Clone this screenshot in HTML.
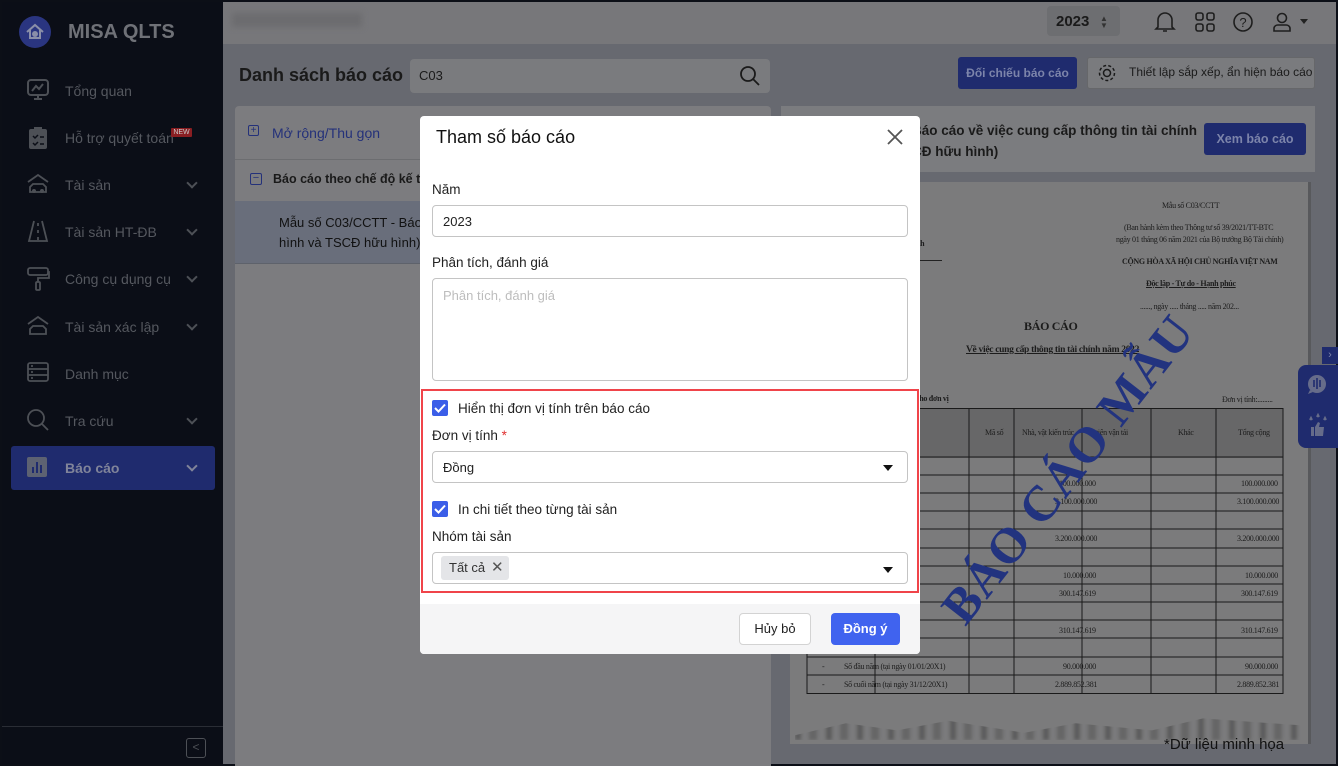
<!DOCTYPE html>
<html><head><meta charset="utf-8"><style>
*{box-sizing:border-box;margin:0;padding:0}
body{width:1338px;height:766px;overflow:hidden;position:relative;font-family:"Liberation Sans",sans-serif;background:#0c0f17}
.a{position:absolute}
.side{left:2px;top:2px;width:221px;height:762px;background:#0b0e17}
.nav{position:absolute;left:26px;font-size:14px;color:#55585f}
.chev{position:absolute;left:188px;width:8px;height:8px;border-right:2px solid #4d5056;border-bottom:2px solid #4d5056;transform:rotate(45deg)}
.paper{font-family:"Liberation Serif",serif;color:#1c1c1c;font-size:8px;position:absolute;white-space:nowrap;letter-spacing:-0.3px}
.modal{left:420px;top:116px;width:500px;height:538px;background:#fff;border-radius:4px;overflow:hidden}
.lbl{position:absolute;left:12px;font-size:13.5px;color:#222}
.inp{position:absolute;left:12px;width:476px;border:1px solid #c4c4c4;border-radius:4px;background:#fff}
.cb{position:absolute;left:12px;width:16px;height:16px;background:#3b5ee8;border-radius:2px}
.caret{position:absolute;right:14px;width:0;height:0;border-left:5px solid transparent;border-right:5px solid transparent;border-top:6px solid #111}
</style></head><body>
<div class="a side"></div>
<div class="a" style="left:19px;top:16px;width:32px;height:32px;border-radius:50%;background:#2a3580"></div>
<svg class="a" style="left:24px;top:21px" width="22" height="22" viewBox="0 0 22 22"><path d="M3 11 L11 4 L19 11 M6 9 V17 H16 V9" fill="none" stroke="#8a8fa8" stroke-width="2"/><circle cx="11" cy="13" r="3" fill="#8a8fa8"/></svg>
<div class="a" style="left:68px;top:21px;font-size:20px;font-weight:bold;color:#6f7177">MISA QLTS</div>
<div class="nav" style="left:65px;top:83px">Tổng quan</div>
<svg class="a" style="left:26px;top:78px" width="24" height="24"><rect x="2" y="2" width="20" height="15" rx="3" fill="none" stroke="#4d5056" stroke-width="2"/><path d="M6 13 L10 8 L13 11 L17 6 M12 17 V21 M8 21 H16" fill="none" stroke="#4d5056" stroke-width="2"/></svg>
<div class="nav" style="left:65px;top:130px">Hỗ trợ quyết toán</div>
<div class="a" style="left:171px;top:128px;width:21px;height:9px;background:#8a1e22;color:#ccc;font-size:7px;text-align:center;line-height:9px;border-radius:1px">NEW</div>
<svg class="a" style="left:28px;top:126px" width="20" height="24"><rect x="1" y="3" width="18" height="20" rx="2" fill="#4d5056"/><rect x="6" y="1" width="8" height="4" fill="#4d5056"/><path d="M5 10 L7 12 L10 9 M5 17 L7 19 L10 16 M12 11 H16 M12 18 H16" stroke="#0b0e17" stroke-width="1.5" fill="none"/></svg>
<div class="nav" style="left:65px;top:177px">Tài sản</div><div class="chev" style="top:179px"></div>
<svg class="a" style="left:26px;top:172px" width="24" height="24"><path d="M2 10 L12 3 L22 10 M4 20 V15 L7 12 H17 L20 15 V20 Z" fill="none" stroke="#4d5056" stroke-width="1.8"/><circle cx="8" cy="19" r="2" fill="#4d5056"/><circle cx="16" cy="19" r="2" fill="#4d5056"/></svg>
<div class="nav" style="left:65px;top:224px">Tài sản HT-ĐB</div><div class="chev" style="top:226px"></div>
<svg class="a" style="left:26px;top:219px" width="24" height="24"><path d="M8 2 L3 22 H21 L16 2 M12 4 V7 M12 11 V14 M12 18 V21" fill="none" stroke="#4d5056" stroke-width="1.8"/></svg>
<div class="nav" style="left:65px;top:271px">Công cụ dụng cụ</div><div class="chev" style="top:273px"></div>
<svg class="a" style="left:26px;top:266px" width="24" height="26"><rect x="2" y="2" width="20" height="7" rx="2" fill="none" stroke="#4d5056" stroke-width="1.8"/><path d="M22 6 H23 V12 H12 V16" fill="none" stroke="#4d5056" stroke-width="1.8"/><rect x="10" y="16" width="4" height="8" rx="1" fill="none" stroke="#4d5056" stroke-width="1.8"/></svg>
<div class="nav" style="left:65px;top:319px">Tài sản xác lập</div><div class="chev" style="top:321px"></div>
<svg class="a" style="left:26px;top:314px" width="24" height="24"><path d="M2 10 L12 3 L22 10 M4 20 V15 L7 12 H17 L20 15 V20 Z" fill="none" stroke="#4d5056" stroke-width="1.8"/></svg>
<div class="nav" style="left:65px;top:366px">Danh mục</div>
<svg class="a" style="left:26px;top:361px" width="24" height="22"><rect x="2" y="2" width="20" height="18" rx="2" fill="none" stroke="#4d5056" stroke-width="1.8"/><path d="M2 8 H22 M2 14 H22 M5 5 H7 M5 11 H7 M5 17 H7" stroke="#4d5056" stroke-width="1.8"/></svg>
<div class="nav" style="left:65px;top:413px">Tra cứu</div><div class="chev" style="top:415px"></div>
<svg class="a" style="left:26px;top:408px" width="24" height="24"><circle cx="10" cy="10" r="8" fill="none" stroke="#4d5056" stroke-width="1.8"/><path d="M16 16 L22 22" stroke="#4d5056" stroke-width="1.8"/></svg>
<div class="a" style="left:11px;top:446px;width:204px;height:44px;background:#1f2b6e;border-radius:3px"></div>
<div class="a" style="left:27px;top:457px;width:20px;height:20px;background:#5d6272;border-radius:2px"></div>
<div class="a" style="left:32px;top:467px;width:2px;height:6px;background:#1f2b6e"></div><div class="a" style="left:36px;top:462px;width:2px;height:11px;background:#1f2b6e"></div><div class="a" style="left:40px;top:465px;width:2px;height:8px;background:#1f2b6e"></div>
<div class="nav" style="left:65px;top:460px;color:#80849a;font-weight:bold">Báo cáo</div><div class="chev" style="top:462px;border-color:#80849a"></div>
<div class="a" style="left:2px;top:726px;width:221px;height:1px;background:#2a2d35"></div>
<div class="a" style="left:186px;top:738px;width:20px;height:20px;border:1.5px solid #4d5056;border-radius:3px;color:#4d5056;font-size:12px;text-align:center;line-height:17px">&lt;</div>

<div class="a" style="left:223px;top:2px;width:1113px;height:762px;background:#676970"></div>
<div class="a" style="left:223px;top:2px;width:1113px;height:42px;background:#77777a"></div>
<div class="a" style="left:232px;top:13px;width:130px;height:14px;background:#6c6c6f;filter:blur(3px)"></div>
<div class="a" style="left:1047px;top:6px;width:73px;height:30px;background:#6d6e71;border-radius:4px"></div>
<div class="a" style="left:1056px;top:13px;font-size:15px;font-weight:bold;color:#1a1a1a">2023</div>
<div class="a" style="left:1100px;top:15px;font-size:8px;line-height:7px;color:#333">▲<br>▼</div>
<svg class="a" style="left:1153px;top:10px" width="24" height="24"><path d="M5 17 V10 a7 7 0 0 1 14 0 V17 L21 19 H3 Z M10 21 H14" fill="none" stroke="#1e1e1e" stroke-width="1.6"/></svg>
<svg class="a" style="left:1193px;top:10px" width="24" height="24"><rect x="3" y="3" width="7" height="7" rx="2" fill="none" stroke="#1e1e1e" stroke-width="1.6"/><rect x="14" y="3" width="7" height="7" rx="2" fill="none" stroke="#1e1e1e" stroke-width="1.6"/><rect x="3" y="14" width="7" height="7" rx="2" fill="none" stroke="#1e1e1e" stroke-width="1.6"/><rect x="14" y="14" width="7" height="7" rx="2" fill="none" stroke="#1e1e1e" stroke-width="1.6"/></svg>
<svg class="a" style="left:1231px;top:10px" width="24" height="24"><circle cx="12" cy="12" r="9" fill="none" stroke="#1e1e1e" stroke-width="1.6"/><text x="12" y="17" font-size="13" text-anchor="middle" fill="#1e1e1e" font-family="Liberation Sans">?</text></svg>
<svg class="a" style="left:1270px;top:10px" width="24" height="24"><circle cx="12" cy="8" r="4.5" fill="none" stroke="#1e1e1e" stroke-width="1.6"/><path d="M4 21 V18 a4 4 0 0 1 4 -3 H16 a4 4 0 0 1 4 3 V21 Z" fill="none" stroke="#1e1e1e" stroke-width="1.6"/></svg>
<div class="a" style="left:1300px;top:19px;border-left:4px solid transparent;border-right:4px solid transparent;border-top:5px solid #222"></div>

<div class="a" style="left:239px;top:65px;font-size:18px;font-weight:bold;color:#1a1a1a">Danh sách báo cáo</div>
<div class="a" style="left:410px;top:59px;width:360px;height:34px;background:#7a7b7e;border-radius:4px"></div>
<div class="a" style="left:419px;top:68px;font-size:13px;color:#1a1a1a">C03</div>
<svg class="a" style="left:739px;top:65px" width="22" height="22"><circle cx="9" cy="9" r="7" fill="none" stroke="#1a1a1a" stroke-width="1.8"/><path d="M14 14 L20 20" stroke="#1a1a1a" stroke-width="1.8"/></svg>
<div class="a" style="left:958px;top:57px;width:119px;height:32px;background:#1f2b6e;border-radius:3px;color:#7c84aa;font-size:12px;font-weight:bold;text-align:center;line-height:32px">Đối chiếu báo cáo</div>
<div class="a" style="left:1087px;top:57px;width:228px;height:32px;background:#7a7b7e;border:1px solid #66676a;border-radius:3px"></div>
<svg class="a" style="left:1096px;top:62px" width="22" height="22"><circle cx="11" cy="11" r="3.5" fill="none" stroke="#1a1a1a" stroke-width="1.5"/><circle cx="11" cy="11" r="7.5" fill="none" stroke="#1a1a1a" stroke-width="1.5" stroke-dasharray="3 2.2"/></svg>
<div class="a" style="left:1129px;top:65px;font-size:12px;color:#1a1a1a">Thiết lập sắp xếp, ẩn hiện báo cáo</div>

<div class="a" style="left:235px;top:106px;width:536px;height:660px;background:#7c7c7f;border-radius:4px 4px 0 0"></div>
<div class="a" style="left:235px;top:159px;width:536px;height:1px;background:#6c6d70"></div>
<div class="a" style="left:248px;top:125px;width:11px;height:11px;border:1px solid #24317a;border-radius:2px;color:#24317a;font-size:10px;line-height:9px;text-align:center">+</div>
<div class="a" style="left:272px;top:125px;font-size:14px;color:#24317a">Mở rộng/Thu gọn</div>
<div class="a" style="left:250px;top:173px;width:12px;height:12px;border:1px solid #24317a;border-radius:2px;color:#24317a;font-size:11px;line-height:9px;text-align:center">−</div>
<div class="a" style="left:273px;top:172px;font-size:12.5px;font-weight:bold;color:#1a1a1a">Báo cáo theo chế độ kế to</div>
<div class="a" style="left:235px;top:201px;width:536px;height:63px;background:#696e7b;border-bottom:1px solid #5e626b"></div>
<div class="a" style="left:279px;top:213px;font-size:13px;color:#111;line-height:20px">Mẫu số C03/CCTT - Báo<br>hình và TSCĐ hữu hình)</div>

<div class="a" style="left:781px;top:106px;width:534px;height:66px;background:#7b7c7f"></div>
<div class="a" style="left:912px;top:120px;font-size:13.5px;font-weight:bold;color:#1a1a1a;line-height:21px">Báo cáo về việc cung cấp thông tin tài chính<br>CĐ hữu hình)</div>
<div class="a" style="left:1204px;top:123px;width:102px;height:32px;background:#1f2b6e;border-radius:3px;color:#7c84aa;font-size:12.5px;font-weight:bold;text-align:center;line-height:32px">Xem báo cáo</div>
<div class="a" style="left:790px;top:182px;width:521px;height:562px;background:#7b7b7c;border-right:3px solid #58595c"></div>
<div class="paper" style="left:1162px;top:201px">Mẫu số C03/CCTT</div>
<div class="paper" style="left:1124px;top:223px">(Ban hành kèm theo Thông tư số 39/2021/TT-BTC</div>
<div class="paper" style="left:1116px;top:235px">ngày 01 tháng 06 năm 2021 của Bộ trưởng Bộ Tài chính)</div>
<div class="paper" style="left:1122px;top:257px;font-weight:bold">CỘNG HÒA XÃ HỘI CHỦ NGHĨA VIỆT NAM</div>
<div class="paper" style="left:1146px;top:279px;font-weight:bold;text-decoration:underline">Độc lập - Tự do - Hạnh phúc</div>
<div class="paper" style="left:1140px;top:302px">......, ngày ..... tháng ..... năm 202...</div>
<div class="paper" style="left:1024px;top:319px;font-size:12px;font-weight:bold">BÁO CÁO</div>
<div class="paper" style="left:966px;top:345px;font-size:9.5px;font-weight:bold;text-decoration:underline">Về việc cung cấp thông tin tài chính năm 2022</div>
<div class="paper" style="left:916px;top:239px;font-weight:bold">nh</div>
<div class="a" style="left:916px;top:260px;width:26px;height:1px;background:#222"></div>
<div class="paper" style="left:916px;top:394px;font-weight:bold">cho đơn vị</div>
<div class="paper" style="left:1222px;top:395px">Đơn vị tính:.........</div>
<div class="a" style="left:920px;top:408px;width:363px;height:50px;background:#676768"></div>
<svg class="a" style="left:806px;top:407px" width="480" height="290">
<g stroke="#1a1a1a" stroke-width="1" fill="none">
<rect x="1" y="1.5" width="476" height="285"/>
<path d="M69 1 V287 M163 1 V287 M208 1 V287 M276 1 V287 M345 1 V287 M410 1 V287"/>
<path d="M1 50 H477 M1 68 H477 M1 86 H477 M1 104 H477 M1 122 H477 M1 141 H477 M1 159 H477 M1 177 H477 M1 195 H477 M1 213 H477 M1 231 H477 M1 250 H477 M1 268 H477"/>
</g></svg>
<div class="paper" style="left:985px;top:428px">Mã số</div>
<div class="paper" style="left:1022px;top:428px">Nhà, vật kiến trúc</div>
<div class="paper" style="left:1096px;top:428px">tiện vận tải</div>
<div class="paper" style="left:1178px;top:428px">Khác</div>
<div class="paper" style="left:1238px;top:428px">Tổng cộng</div>
<div class="paper" style="left:1059px;top:479px">100.000.000</div><div class="paper" style="left:1241px;top:479px">100.000.000</div>
<div class="paper" style="left:1055px;top:497px">3.100.000.000</div><div class="paper" style="left:1237px;top:497px">3.100.000.000</div>
<div class="paper" style="left:1055px;top:534px">3.200.000.000</div><div class="paper" style="left:1237px;top:534px">3.200.000.000</div>
<div class="paper" style="left:1063px;top:571px">10.000.000</div><div class="paper" style="left:1245px;top:571px">10.000.000</div>
<div class="paper" style="left:1059px;top:589px">300.147.619</div><div class="paper" style="left:1241px;top:589px">300.147.619</div>
<div class="paper" style="left:1059px;top:626px">310.147.619</div><div class="paper" style="left:1241px;top:626px">310.147.619</div>
<div class="paper" style="left:1063px;top:662px">90.000.000</div><div class="paper" style="left:1245px;top:662px">90.000.000</div>
<div class="paper" style="left:1055px;top:680px">2.889.852.381</div><div class="paper" style="left:1237px;top:680px">2.889.852.381</div>
<div class="paper" style="left:844px;top:662px">Số đầu năm (tại ngày 01/01/20X1)</div>
<div class="paper" style="left:844px;top:680px">Số cuối năm (tại ngày 31/12/20X1)</div>
<div class="paper" style="left:822px;top:662px">-</div><div class="paper" style="left:822px;top:680px">-</div>
<div class="a" style="left:795px;top:716px;width:510px;height:24px;background:repeating-linear-gradient(90deg,#444 0 6px,transparent 6px 14px,#555 14px 22px,transparent 22px 31px);opacity:.55;filter:blur(1.5px);clip-path:polygon(0 80%,10% 30%,20% 60%,30% 20%,45% 70%,55% 30%,70% 60%,80% 10%,100% 40%,100% 100%,0 100%)"></div>
<div class="a" style="left:880px;top:440px;font-family:'Liberation Serif',serif;font-weight:bold;font-size:50px;color:#22337f;transform:rotate(-52deg);white-space:nowrap;letter-spacing:1px">BÁO CÁO MẪU</div>
<div class="a" style="left:1164px;top:736px;font-size:15px;color:#111">*Dữ liệu minh họa</div>
<div class="a" style="left:1322px;top:347px;width:16px;height:17px;background:#1f2b6e;color:#7c84aa;font-size:11px;text-align:center;line-height:17px">›</div>
<div class="a" style="left:1298px;top:365px;width:40px;height:83px;background:#1f2b6e;border-radius:8px 0 0 8px"></div>
<svg class="a" style="left:1305px;top:372px" width="26" height="70"><circle cx="12" cy="12" r="9" fill="#666c8a"/><path d="M9 8 V15 M12 6 V17 M15 8 V15" stroke="#1f2b6e" stroke-width="1.6"/><path d="M5 18 L3 22 L8 20" fill="#666c8a"/><path d="M5 48 L6 46 L7 48 M12 45 L13 43 L14 45 M19 48 L20 46 L21 48" stroke="#666c8a" stroke-width="2"/><path d="M6 55 H9 V64 H6 Z M10 55 L13 50 L15 51 L14 55 H19 L18 64 H10 Z" fill="#666c8a"/></svg>

<div class="a modal">
<div class="a" style="left:16px;top:11px;font-size:18px;color:#111">Tham số báo cáo</div>
<svg class="a" style="left:466px;top:12px" width="18" height="18"><path d="M2 2 L16 16 M16 2 L2 16" stroke="#555" stroke-width="1.8"/></svg>
<div class="lbl" style="top:66px">Năm</div>
<div class="inp" style="top:89px;height:32px"><span style="position:absolute;left:10px;top:8px;font-size:13px;color:#222">2023</span></div>
<div class="lbl" style="top:139px">Phân tích, đánh giá</div>
<div class="inp" style="top:162px;height:103px"><span style="position:absolute;left:10px;top:9px;font-size:13px;color:#bdbdbd">Phân tích, đánh giá</span></div>
<div class="a" style="left:1px;top:273px;width:498px;height:204px;border:2.5px solid #f0444a"></div>
<div class="cb" style="top:284px"><svg width="16" height="16"><path d="M3 8 L6.5 11.5 L13 4.5" stroke="#fff" stroke-width="2" fill="none"/></svg></div>
<div class="lbl" style="left:38px;top:285px">Hiển thị đơn vị tính trên báo cáo</div>
<div class="lbl" style="top:312px">Đơn vị tính <span style="color:#e03030">*</span></div>
<div class="inp" style="top:335px;height:32px"><span style="position:absolute;left:10px;top:8px;font-size:13px;color:#222">Đồng</span><div class="caret" style="top:13px"></div></div>
<div class="cb" style="top:385px"><svg width="16" height="16"><path d="M3 8 L6.5 11.5 L13 4.5" stroke="#fff" stroke-width="2" fill="none"/></svg></div>
<div class="lbl" style="left:38px;top:386px">In chi tiết theo từng tài sản</div>
<div class="lbl" style="top:413px">Nhóm tài sản</div>
<div class="inp" style="top:436px;height:32px"><div style="position:absolute;left:8px;top:3px;width:68px;height:24px;background:#e4e5e8;border-radius:3px"><span style="position:absolute;left:8px;top:4px;font-size:13px;color:#333">Tất cả</span><span style="position:absolute;left:50px;top:2px;font-size:15px;color:#555">✕</span></div><div class="caret" style="top:14px"></div></div>
<div class="a" style="left:0;top:488px;width:500px;height:50px;background:#f5f5f6"></div>
<div class="a" style="left:319px;top:497px;width:72px;height:32px;background:#fff;border:1px solid #d3d3d3;border-radius:4px;font-size:13px;color:#222;text-align:center;line-height:30px">Hủy bỏ</div>
<div class="a" style="left:411px;top:497px;width:69px;height:32px;background:#4063ef;border-radius:4px;font-size:13px;font-weight:bold;color:#fff;text-align:center;line-height:32px">Đồng ý</div>
</div>
</body></html>
